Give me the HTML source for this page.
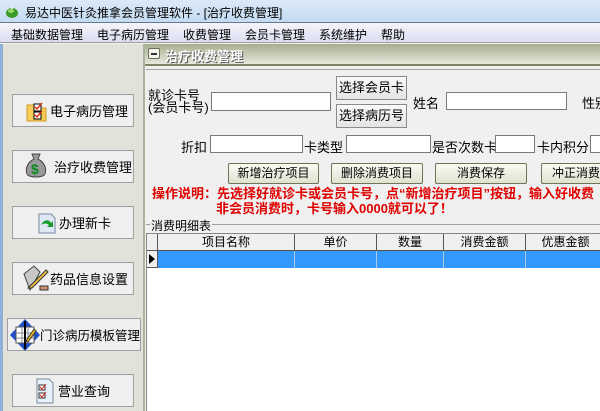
<!DOCTYPE html>
<html><head><meta charset="utf-8"><style>
*{margin:0;padding:0;box-sizing:border-box}
body{width:600px;height:411px;overflow:hidden;position:relative;background:#f0f0f0;font-family:"Liberation Sans","Noto Sans CJK SC","WenQuanYi Zen Hei",sans-serif;font-size:12px;color:#000}
.a{position:absolute}
span{white-space:nowrap}
.title{left:0;top:0;width:600px;height:23px;background:linear-gradient(#dbe9f8,#c4dbf2);border-bottom:1px solid #6a7a8a}
.menu{left:0;top:23px;width:600px;height:20px;background:linear-gradient(#f4f4fc,#dcdef0);border-bottom:1px solid #a0a0a0}
.menu span{position:absolute;top:3px;font-size:12px}
.left{left:0;top:44px;width:145px;height:367px;background:#e2e2da;border-left:3px solid #8fb0d8;border-right:2px solid #a8b49c}
.lb{position:absolute;background:#efefef;border:1px solid #a0a0a0;font-size:13px;display:flex;align-items:center;white-space:nowrap}
.hdr{left:145px;top:44px;width:455px;height:22px;background:linear-gradient(#a6ae8e,#e6e8dc);border-bottom:2px solid #7d8466}
.hdr b{position:absolute;left:20px;top:2px;color:#fff;font-size:13px;text-shadow:1px 1px 0 #555}
.inp{position:absolute;background:#fff;border:1px solid #7a7a7a;height:18px}
.btn{position:absolute;background:linear-gradient(#fafafa,#e4e4e4);border:1px solid #8a8a8a;font-size:12px;text-align:center;line-height:22px;white-space:nowrap}
.gb{position:absolute;background:linear-gradient(#fbfbf4,#dfe2d0);border:1px solid #6e7458;border-radius:2px;font-size:12px;text-align:center;line-height:19px;white-space:nowrap;overflow:hidden}
.red{color:#e00000;font-weight:bold;font-size:13px;white-space:nowrap;line-height:14px}
.th{position:absolute;top:234px;height:17px;background:#efefef;border-right:1px solid #555;border-bottom:1px solid #555;text-align:center;line-height:16px}
.td{position:absolute;top:251px;height:17px;background:#3399ff;border-right:1px solid #aac8e8}
</style></head><body>
<div class="a title"><svg class="a" style="left:5px;top:4px" width="14" height="14"><ellipse cx="7" cy="9" rx="6" ry="5" fill="#3a9a2a"/><ellipse cx="6" cy="7" rx="3" ry="2" fill="#9ade6a"/><rect x="6" y="1" width="2" height="4" fill="#e8e8e8"/></svg><span class="a" style="left:25px;top:4px;font-size:12px">易达中医针灸推拿会员管理软件 - [治疗收费管理]</span></div>
<div class="a menu"><span style="left:11px">基础数据管理</span><span style="left:97px">电子病历管理</span><span style="left:183px">收费管理</span><span style="left:245px">会员卡管理</span><span style="left:319px">系统维护</span><span style="left:381px">帮助</span></div>
<div class="a left">
<div class="lb" style="left:9px;top:50px;width:122px;height:33px"><svg width="24" height="24" style="margin-left:12px"><path d="M2 6h8l2 3h9v13H2z" fill="#f8cc58" stroke="#d09a20"/><rect x="9" y="5" width="7" height="7" fill="#fff" stroke="#000"/><rect x="9" y="13" width="7" height="7" fill="#fff" stroke="#000"/><path d="M10 8l2 2 5-6M10 16l2 2 5-6" stroke="#e03010" stroke-width="1.5" fill="none"/></svg><span style="margin-left:1px">电子病历管理</span></div>
<div class="lb" style="left:9px;top:106px;width:122px;height:33px"><svg width="28" height="30" style="margin-left:9px;margin-top:-4px"><path d="M10 4h8l-2 5c6 3 9 9 7 15-2 4-16 4-18 0-2-6 1-12 7-15z" fill="#9a9a9a" stroke="#444"/><text x="9" y="24" font-size="14" font-weight="bold" fill="#0a8a20">$</text></svg><span style="margin-left:4px">治疗收费管理</span></div>
<div class="lb" style="left:9px;top:162px;width:122px;height:33px"><svg width="24" height="24" style="margin-left:22px"><path d="M4 3h12l4 4v15H4z" fill="#dde8f4" stroke="#7a8aa0"/><path d="M6 14c3-6 8-6 10-2l2-2v6h-6l2-2c-2-2-5-2-8 0z" fill="#1a9a2a"/></svg><span>办理新卡</span></div>
<div class="lb" style="left:9px;top:218px;width:122px;height:33px"><svg width="30" height="30" style="margin-left:7px"><path d="M4 10l10-8 6 6-10 18z" fill="#c8c8c8" stroke="#444"/><path d="M8 24l18-18 2 2-16 16z" fill="#f0c040" stroke="#333"/><path d="M20 22h8v4h-8z" fill="#d09070" stroke="#333"/></svg><span>药品信息设置</span></div>
<div class="lb" style="left:4px;top:274px;width:134px;height:33px"><svg width="30" height="32" style="margin-left:2px;flex:none"><path d="M15 0l15 16-15 16L0 16z" fill="#2050c8"/><rect x="6" y="8" width="18" height="16" fill="#fff" stroke="#555"/><path d="M12 8v16M18 8v16M6 14h18M6 19h18" stroke="#888"/><path d="M15 2v28" stroke="#000" stroke-width="2"/><path d="M16 22l8-12 2 2-8 11z" fill="#f0c020" stroke="#333"/></svg><span style="font-size:12.5px">门诊病历模板管理</span></div>
<div class="lb" style="left:9px;top:330px;width:122px;height:33px"><svg width="20" height="26" style="margin-left:22px"><path d="M2 1h12l4 4v20H2z" fill="#e8f0fa" stroke="#7a8aa0"/><rect x="4" y="7" width="6" height="5" fill="#fff" stroke="#333"/><rect x="4" y="15" width="6" height="5" fill="#fff" stroke="#333"/><path d="M5 9l2 2 4-5M5 17l2 2 4-5" stroke="#d02010" fill="none"/></svg><span style="margin-left:3px">营业查询</span></div>
</div>
<div class="a hdr"><div class="a" style="left:3px;top:4px;width:12px;height:11px;background:#f4f4ec;border:1px solid #6a7058;border-radius:2px"><div class="a" style="left:2px;top:4px;width:6px;height:2px;background:#333"></div></div><b>治疗收费管理</b></div>
<div class="a" style="left:146px;top:69px;width:454px;height:1px;background:#a0a0a0"></div>
<span class="a" style="left:148px;top:90px;font-size:13px;line-height:12px">就诊卡号<br>(会员卡号)</span>
<div class="inp" style="left:211px;top:92px;width:120px;height:19px"></div>
<div class="btn" style="left:336px;top:76px;width:71px;height:24px;font-size:13px">选择会员卡</div>
<div class="btn" style="left:336px;top:104px;width:71px;height:24px;font-size:13px">选择病历号</div>
<span class="a" style="left:413px;top:93px;font-size:13px">姓名</span>
<div class="inp" style="left:446px;top:92px;width:121px"></div>
<span class="a" style="left:582px;top:93px;font-size:13px">性别</span>
<span class="a" style="left:181px;top:137px;font-size:13px">折扣</span>
<div class="inp" style="left:210px;top:135px;width:93px"></div>
<span class="a" style="left:304px;top:137px;font-size:13px">卡类型</span>
<div class="inp" style="left:346px;top:135px;width:85px"></div>
<span class="a" style="left:432px;top:137px;font-size:13px">是否次数卡</span>
<div class="inp" style="left:495px;top:135px;width:40px"></div>
<span class="a" style="left:537px;top:137px;font-size:13px">卡内积分</span>
<div class="inp" style="left:590px;top:135px;width:20px"></div>
<div class="gb" style="left:228px;top:163px;width:91px;height:21px">新增治疗项目</div>
<div class="gb" style="left:331px;top:163px;width:92px;height:21px">删除消费项目</div>
<div class="gb" style="left:435px;top:163px;width:92px;height:21px">消费保存</div>
<div class="gb" style="left:541px;top:163px;width:80px;height:21px;text-align:left;padding-left:10px">冲正消费</div>
<div class="a red" style="left:152px;top:187px">操作说明：先选择好就诊卡或会员卡号，点“新增治疗项目”按钮，输入好收费</div>
<div class="a red" style="left:216px;top:202px">非会员消费时，卡号输入0000就可以了！</div>
<div class="a" style="left:146px;top:224px;width:454px;height:1px;background:#a0a0a0"></div>
<span class="a" style="left:150px;top:217px;background:#f0f0f0;padding:0 1px">消费明细表</span>
<div class="a" style="left:146px;top:233px;width:454px;height:178px;background:#fff;border-left:1px solid #888;border-top:1px solid #888"></div>
<div class="th" style="left:147px;width:11px"></div>
<div class="th" style="left:158px;width:137px">项目名称</div>
<div class="th" style="left:295px;width:82px">单价</div>
<div class="th" style="left:377px;width:67px">数量</div>
<div class="th" style="left:444px;width:82px">消费金额</div>
<div class="th" style="left:526px;width:80px">优惠金额</div>
<div class="a" style="left:147px;top:251px;width:11px;height:17px;background:#efefef;border-right:1px solid #555;border-bottom:1px solid #555"><svg class="a" style="left:2px;top:3px" width="6" height="10"><path d="M0 0l6 5-6 5z" fill="#000"/></svg></div>
<div class="td" style="left:158px;width:137px"></div>
<div class="td" style="left:295px;width:82px"></div>
<div class="td" style="left:377px;width:67px"></div>
<div class="td" style="left:444px;width:82px"></div>
<div class="td" style="left:526px;width:80px"></div>
</body></html>
